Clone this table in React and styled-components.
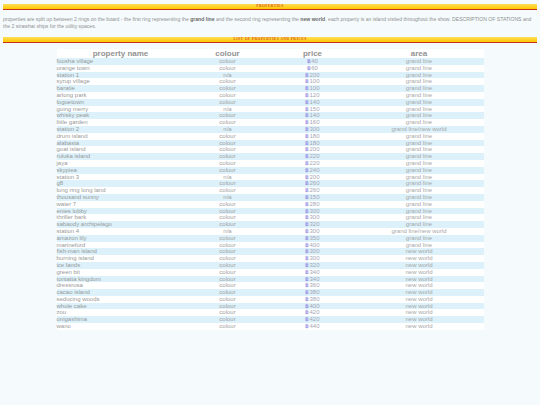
import React from "react";
import styled, { createGlobalStyle } from "styled-components";

const Global = createGlobalStyle`
  html, body { margin: 0; padding: 0; background: #f5fbfd; }
  body { font-family: "Liberation Sans", Arial, sans-serif; }
`;

const Page = styled.div`
  padding: 4px 3px 10px 3px;
`;

const Bar = styled.div`
  height: 5px;
  background: linear-gradient(#ffdf5a, #ffc800);
  border-bottom: 1.2px solid #c8321a;
  display: flex;
  align-items: center;
  justify-content: center;
  margin-top: ${(p) => p.$top || 0}px;
`;

const BarTitle = styled.span`
  font-family: "Liberation Serif", "Times New Roman", serif;
  font-weight: bold;
  font-size: 3.6px;
  letter-spacing: 0.45px;
  color: #d9561e;
  text-transform: uppercase;
  line-height: 5px;
`;

const Intro = styled.p`
  margin: 6px 0 0 0;
  font-size: 5.1px;
  line-height: 7px;
  color: #8f8f8f;
  b { color: #6a6a6a; }
`;

const Table = styled.table`
  margin: 6px auto 0 auto;
  width: 427px;
  border-collapse: collapse;
  background: #fff;
  table-layout: fixed;
`;

const Th = styled.th`
  font-size: 8px;
  line-height: 9px;
  font-weight: bold;
  color: #929292;
  padding: 0;
  text-align: center;
  width: ${(p) => p.$w}px;
`;

const Row = styled.tr`
  background: ${(p) => (p.$odd ? "#dcf1fa" : "#ffffff")};
`;

const Td = styled.td`
  font-size: 6px;
  line-height: 6.8px;
  height: 6.8px;
  padding: 0;
  color: ${(p) => p.$color || "#9a9a9a"};
  text-align: ${(p) => (p.$left ? "left" : "center")};
  white-space: nowrap;
`;

const Berry = styled.span`
  color: #8a7fe0;
`;

const rows = [
  ["foosha village", 40, "g"],
  ["orange town", 60, "g"],
  ["station 1", 200, "g", true],
  ["syrup village", 100, "g"],
  ["baratie", 100, "g"],
  ["arlong park", 120, "g"],
  ["loguetown", 140, "g"],
  ["going merry", 150, "g", true],
  ["whisky peak", 140, "g"],
  ["little garden", 160, "g"],
  ["station 2", 300, "gn", true],
  ["drum island", 180, "g"],
  ["alabasta", 180, "g"],
  ["goat island", 200, "g"],
  ["ruluka island", 220, "g"],
  ["jaya", 220, "g"],
  ["skypiea", 240, "g"],
  ["station 3", 200, "g", true],
  ["g8", 260, "g"],
  ["long ring long land", 260, "g"],
  ["thousand sunny", 150, "g", true],
  ["water 7", 280, "g"],
  ["enies lobby", 300, "g"],
  ["thriller bark", 300, "g"],
  ["sabaody archipelago", 320, "g"],
  ["station 4", 300, "gn", true],
  ["amazon lily", 350, "g"],
  ["marineford", 400, "g"],
  ["fish-man island", 300, "n"],
  ["burning island", 300, "n"],
  ["ice lands", 320, "n"],
  ["green bit", 340, "n"],
  ["tontatta kingdom", 340, "n"],
  ["dressrosa", 360, "n"],
  ["cacao island", 380, "n"],
  ["seducing woods", 380, "n"],
  ["whole cake", 400, "n"],
  ["zou", 420, "n"],
  ["onigashima", 420, "n"],
  ["wano", 440, "n"],
];

const areaName = { g: "grand line", n: "new world", gn: "grand line/new world" };

export default function App() {
  return (
    <Page>
      <Global />
      <Bar>
        <BarTitle>properties</BarTitle>
      </Bar>
      <Intro>
        properties are split up between 2 rings on the board - the first ring representing the <b>grand line</b> and the second ring representing the <b>new world</b>. each property is an island visited throughout the show. DESCRIPTION OF STATIONS and the 2 strawhat ships for the utility spaces.
      </Intro>
      <Bar $top={7}>
        <BarTitle>list of properties and prices</BarTitle>
      </Bar>
      <Table>
        <thead>
          <tr>
            <Th $w={128}>property name</Th>
            <Th $w={86}>colour</Th>
            <Th $w={84}>price</Th>
            <Th $w={129}>area</Th>
          </tr>
        </thead>
        <tbody>
          {rows.map(([name, price, area, na], i) => (
            <Row key={name} $odd={i % 2 === 0}>
              <Td $left $color="#999">{name}</Td>
              <Td $color="#a2a2a2">{na ? "n/a" : "colour"}</Td>
              <Td $color="#a6a6b4">
                <Berry>฿</Berry>
                {price}
              </Td>
              <Td $color="#a8a8a8">{areaName[area]}</Td>
            </Row>
          ))}
        </tbody>
      </Table>
    </Page>
  );
}
